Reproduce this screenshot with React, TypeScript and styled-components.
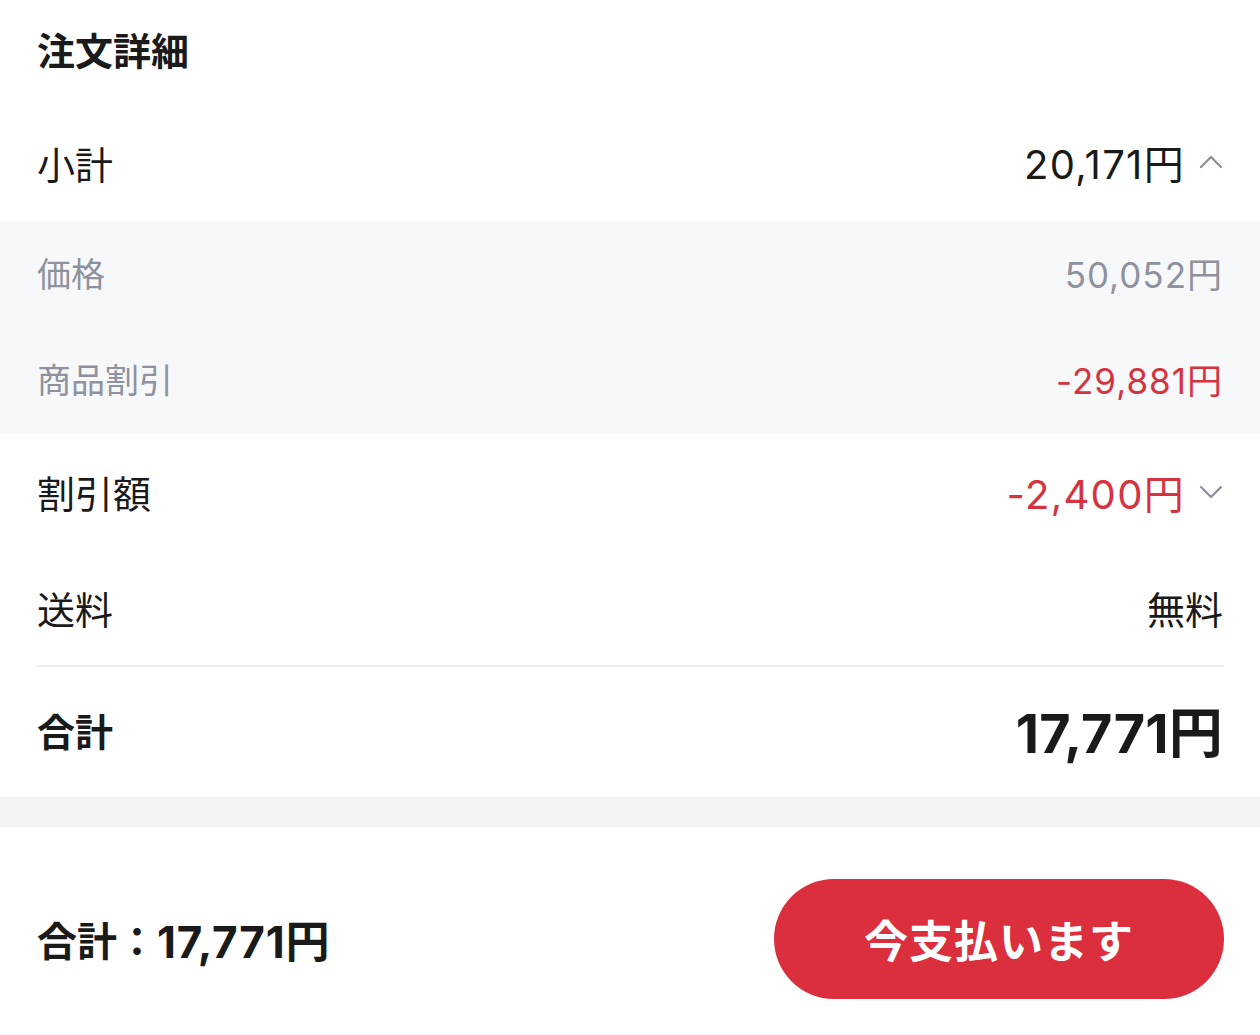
import { createGlobalStyle, styled } from "styled-components";

const GlobalStyle = createGlobalStyle`
  html, body {
    margin: 0;
    padding: 0;
    background: #ffffff;
    font-family: "Noto Sans CJK JP", "Noto Sans", sans-serif;
    color: #1a1a1a;
  }
`;

const numFont = `"Inter", "Noto Sans CJK JP", sans-serif`;

const Page = styled.div`
  width: 1260px;
  height: 1035px;
  display: flex;
  flex-direction: column;
  overflow: hidden;
`;

const Header = styled.h2`
  margin: 0;
  height: 108px;
  padding: 27px 37px 0;
  box-sizing: border-box;
  font-size: 38px;
  font-weight: 700;
  line-height: 44px;
`;

const Row = styled.div<{ $h: number; $size?: number; $muted?: boolean; $bold?: boolean }>`
  height: ${(p) => p.$h}px;
  padding: 0 37px 5px;
  box-sizing: border-box;
  display: flex;
  align-items: center;
  justify-content: space-between;
  font-size: ${(p) => p.$size ?? 38}px;
  font-weight: ${(p) => (p.$bold ? 700 : 400)};
  color: ${(p) => (p.$muted ? "#8e929d" : "#1a1a1a")};
`;

const SubGroup = styled.div`
  background: #f7f8fa;
`;

const Value = styled.span<{ $red?: boolean; $size: number; $spacing?: number }>`
  display: flex;
  align-items: center;
  gap: 14px;
  font-family: ${numFont};
  color: ${(p) => (p.$red ? "#d4333f" : "inherit")};
  font-size: ${(p) => p.$size}px;
  letter-spacing: ${(p) => p.$spacing ?? 0}px;
`;

const Divider = styled.hr`
  margin: 0 36px;
  border: none;
  height: 2px;
  background: #efefef;
`;

const Band = styled.div`
  height: 30px;
  background: #f4f4f4;
`;

const Footer = styled.div`
  flex: 1;
  display: flex;
  align-items: flex-start;
  justify-content: space-between;
  padding: 52px 36px 0 37px;
`;

const FooterTotal = styled.span`
  height: 120px;
  display: flex;
  align-items: center;
  font-size: 40px;
  font-weight: 700;
`;

const FooterAmount = styled.span`
  font-family: ${numFont};
  font-size: 44px;
  letter-spacing: 0.8px;
`;

const PayButton = styled.button`
  width: 450px;
  height: 120px;
  border: none;
  border-radius: 60px;
  background: #dc2f3d;
  color: #ffffff;
  font-family: "Noto Sans CJK JP", "Noto Sans", sans-serif;
  font-size: 44px;
  font-weight: 700;
  letter-spacing: 1px;
  cursor: pointer;
`;

const Chevron = ({ up }: { up?: boolean }) => (
  <svg width="24" height="14" viewBox="0 0 24 14" fill="none">
    <path
      d={up ? "M2 12 L12 2 L22 12" : "M2 2 L12 12 L22 2"}
      stroke="#8e929d"
      strokeWidth="2.4"
      strokeLinecap="round"
      strokeLinejoin="round"
    />
  </svg>
);

export default function App() {
  return (
    <Page>
      <GlobalStyle />
      <Header>注文詳細</Header>
      <Row $h={113}>
        <span>小計</span>
        <Value $size={40} $spacing={1.3}>
          20,171円
          <Chevron up />
        </Value>
      </Row>
      <SubGroup>
        <Row $h={107} $size={34} $muted>
          <span>価格</span>
          <Value $size={35} $spacing={1}>50,052円</Value>
        </Row>
        <Row $h={106} $size={34} $muted>
          <span>商品割引</span>
          <Value $size={35} $spacing={1} $red>-29,881円</Value>
        </Row>
      </SubGroup>
      <Row $h={120}>
        <span>割引額</span>
        <Value $size={40} $spacing={1.3} $red>
          -2,400円
          <Chevron />
        </Value>
      </Row>
      <Row $h={111}>
        <span>送料</span>
        <Value $size={38}>無料</Value>
      </Row>
      <Divider />
      <Row $h={130} $bold>
        <span>合計</span>
        <Value $size={54} $spacing={0.2}>17,771円</Value>
      </Row>
      <Band />
      <Footer>
        <FooterTotal>
          合計：<FooterAmount>17,771円</FooterAmount>
        </FooterTotal>
        <PayButton>今支払います</PayButton>
      </Footer>
    </Page>
  );
}
